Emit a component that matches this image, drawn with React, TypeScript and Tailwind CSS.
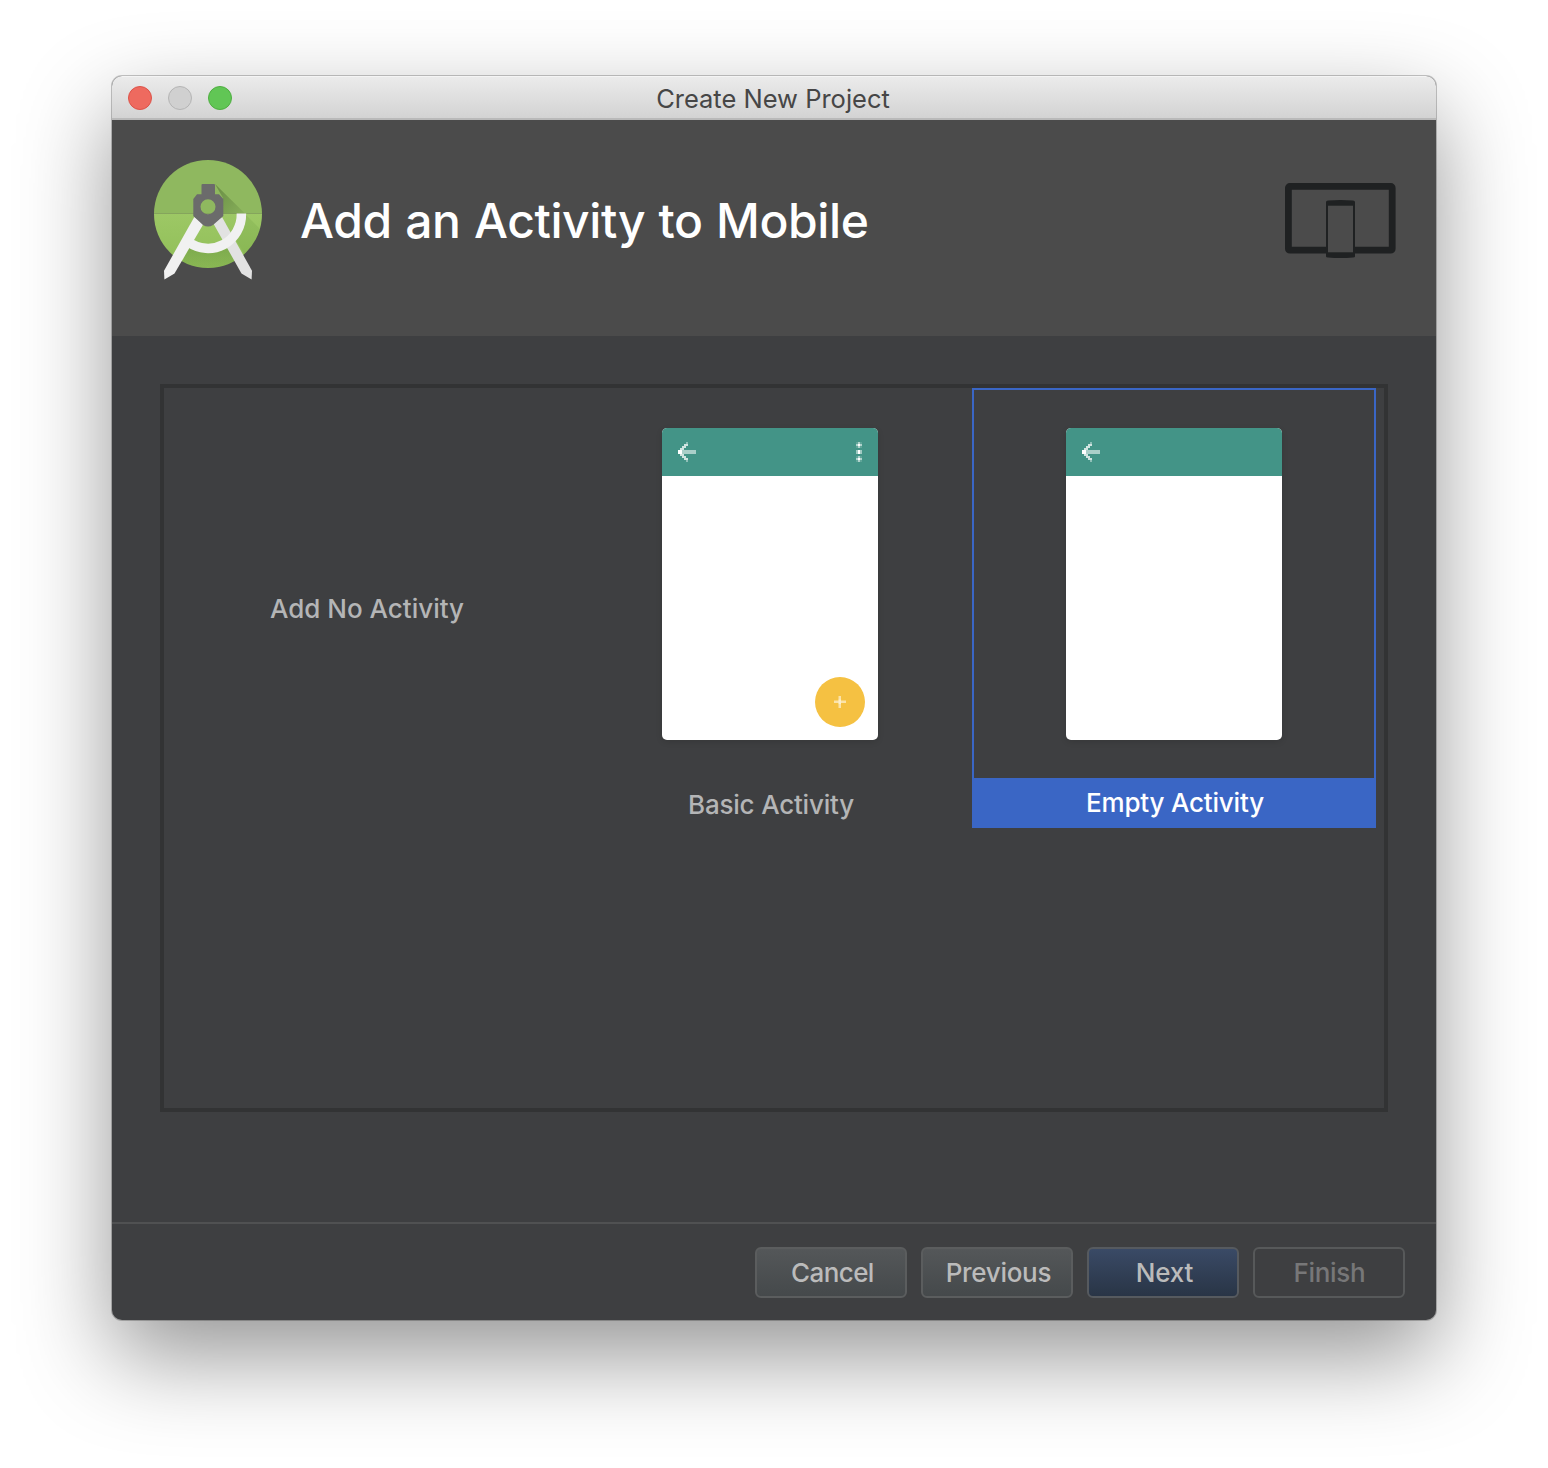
import React from "react";

function StudioLogo() {
  return (
    <svg width="112" height="124" viewBox="0 0 112 124" className="block">
      <defs>
        <clipPath id="disc"><circle cx="56" cy="56" r="54" /></clipPath>
        <linearGradient id="cast" x1="62" y1="30" x2="90" y2="58" gradientUnits="userSpaceOnUse">
          <stop offset="0" stopColor="#3f5c28" stopOpacity="0.45" />
          <stop offset="1" stopColor="#3f5c28" stopOpacity="0.1" />
        </linearGradient>
        <linearGradient id="low" x1="0" y1="55" x2="0" y2="110" gradientUnits="userSpaceOnUse">
          <stop offset="0" stopColor="#9dc865" />
          <stop offset="1" stopColor="#90be58" />
        </linearGradient>
        <linearGradient id="between" x1="0" y1="90" x2="0" y2="112" gradientUnits="userSpaceOnUse">
          <stop offset="0" stopColor="#4c7a2c" stopOpacity="0.32" />
          <stop offset="1" stopColor="#4c7a2c" stopOpacity="0.08" />
        </linearGradient>
      </defs>
      <g clipPath="url(#disc)">
        <rect width="112" height="55.500" fill="#8fb85f" />
        <rect y="55.500" width="112" height="57" fill="url(#low)" />
        <path d="M63 26 L93 55.500 H71 V40Z" fill="url(#cast)" />
        <path d="M36 90 Q56 98 78 90 L92 114 H26Z" fill="url(#between)" />
        <path d="M94 57 L112 75 V100 L98 106 L84 82Z" fill="#4c7a2c" opacity="0.12" />
      </g>
      <path d="M60.500 64 L70 59 L100 112.700 L99.600 121.500 L89.500 115.500 Z" fill="#e2e2e2" />
      <path d="M89.400 55.500 A33.400 34 0 0 1 36.500 84" fill="none" stroke="#f1f1f1" strokeWidth="9.500" />
      <path d="M42.300 59 L52 65 L22.500 115.500 L12.400 121.500 L12 112.700 Z" fill="#f1f1f1" />
      <path
        fillRule="evenodd"
        d="M50.500 26 H62 Q63 26 63 27 V36.300 H67 L71.300 41 V58 L61 67 Q56 70 51 67 L41.300 58 V41 L45 36.300 H49.500 V27 Q49.500 26 50.500 26Z M56 41.300 A7.500 7.500 0 1 0 56 56.300 A7.500 7.500 0 1 0 56 41.300Z"
        fill="#6b6b6b"
      />
    </svg>
  );
}

function DevicesIcon() {
  return (
    <svg width="112" height="78" viewBox="0 0 112 78" className="block">
      <rect x="4.4" y="4.4" width="103.8" height="63.8" rx="1.5" fill="none" stroke="#1f2122" strokeWidth="6.8" />
      <path d="M42 20 Q42 18.800 44 18.600 Q56.500 17.400 69 18.600 Q71 18.800 71 20 V74.500 Q71 75.500 69 75.600 Q56.500 76.600 44 75.600 Q42 75.500 42 74.500Z" fill="#1f2122" />
      <rect x="44" y="23.700" width="25" height="46.600" fill="#4b4b4b" />
    </svg>
  );
}

function BackArrow() {
  return (
    <svg width="22" height="20" viewBox="0 0 11 10" shapeRendering="crispEdges" className="block" fill="#fff">
      <path d="M1 4h2v2h-2z" />
      <path d="M3 4h7v2h-7z" opacity="0.55" />
      <path d="M2 3h2v1h-2zM3 2h2v1h-2zM4 1h2v1h-2zM2 6h2v1h-2zM3 7h2v1h-2zM4 8h2v1h-2z" opacity="0.75" />
      <path d="M5 0h1v1h-1zM5 9h1v1h-1z" opacity="0.4" />
    </svg>
  );
}

function Dots() {
  return (
    <svg width="6" height="20" viewBox="0 0 3 10" shapeRendering="crispEdges" className="block" fill="#fff">
      <path d="M0 0h3v3h-3zM0 7h3v3h-3z" opacity="0.15" />
      <path d="M1 0h1v1h-1zM1 2h1v1h-1zM0 1h1v1h-1zM2 1h1v1h-1zM1 7h1v1h-1zM1 9h1v1h-1zM0 8h1v1h-1zM2 8h1v1h-1zM0 4h1v2h-1zM2 4h1v2h-1z" opacity="0.5" />
      <path d="M1 1h1v1h-1zM1 4h1v2h-1zM1 8h1v1h-1z" />
    </svg>
  );
}

function Thumbnail({ full }: { full?: boolean }) {
  return (
    <div className="flex h-[312px] w-[216px] flex-col overflow-hidden rounded-[5px] bg-white shadow-[0_2px_6px_rgba(0,0,0,0.12)]">
      <div className="flex h-12 items-center justify-between bg-[#439487] pr-4 pl-3.5">
        <BackArrow />
        {full && <Dots />}
      </div>
      {full && (
        <div className="flex flex-1 items-end justify-end pr-[13.5px] pb-[13.5px]">
          <div className="flex size-[49.5px] items-center justify-center rounded-full bg-[#f5c142]">
            <svg width="12" height="12" viewBox="0 0 12 12" fill="#fff">
              <path d="M4.500 0h2.500v12h-2.500zM0 4.500h12v2.500h-12z" opacity="0.55" />
              <path d="M4.500 3.500h2.500v4.500h-2.500z" opacity="0.4" />
            </svg>
          </div>
        </div>
      )}
    </div>
  );
}

const buttonBase =
  "flex h-[50.5px] w-[152px] items-center justify-center rounded-[6px] border-2 text-[26px] font-[450]";

export default function App() {
  return (
    <div className="h-[1468px] w-[1548px] overflow-hidden bg-white px-28 pt-[76px] font-['Inter',sans-serif]">
      <div className="flex h-[1244px] w-[1324px] flex-col overflow-hidden rounded-[10px] bg-[#3e3f41] shadow-[0_0_0_1px_rgba(0,0,0,0.22),0_36px_92px_rgba(0,0,0,0.42)]">
        <div className="flex h-11 shrink-0 items-center border-t border-b-2 border-t-[#f4f4f4] border-b-[#b9b9b9] bg-gradient-to-b from-[#ebebeb] to-[#d3d3d3]">
          <div className="flex w-40 gap-4 pl-4">
            <span className="size-6 rounded-full border border-[#dc5349] bg-[#ee6a5f]" />
            <span className="size-6 rounded-full border border-[#b4b4b4] bg-[#d0d0d0]" />
            <span className="size-6 rounded-full border border-[#4fae41] bg-[#61c655]" />
          </div>
          <div className="flex-1 pt-0.5 pr-[162px] text-center text-[25.5px] leading-none whitespace-nowrap text-[#464646]">
            <span>Create New Project</span>
          </div>
        </div>

        <header className="flex h-[216px] shrink-0 bg-[#4b4b4b] pr-10 pl-10">
          <div className="pt-[38px]"><StudioLogo /></div>
          <h1 className="flex-1 pt-[72px] pl-9 text-[48px] leading-[58px] font-[450] tracking-[-0.4px] [word-spacing:1px] whitespace-nowrap text-white">
            <span>Add an Activity to Mobile</span>
          </h1>
          <div className="pt-[62px]"><DevicesIcon /></div>
        </header>

        <main className="flex-1 px-12 pt-12">
          <div className="grid h-[728px] grid-cols-[404px_404px_404px] border-4 border-[#323334] text-[26px] leading-8 font-[450]">
            <div className="flex h-[440px] items-center justify-center pt-0.5 pl-0.5 text-[#b4b5b6]">
              <span>Add No Activity</span>
            </div>
            <div className="flex h-[440px] flex-col items-center pt-10 text-[#b4b5b6]">
              <Thumbnail full />
              <div className="pt-[49px] pl-0.5 tracking-[-0.2px]"><span>Basic Activity</span></div>
            </div>
            <div className="flex h-[440px] flex-col items-center border-2 border-[#3a66c5] pt-[38px]">
              <Thumbnail />
              <div className="mt-[38px] flex h-12 w-full shrink-0 items-center justify-center bg-[#3a66c5] pt-0.5 pl-0.5 tracking-[-0.2px] text-white">
                <span>Empty Activity</span>
              </div>
            </div>
          </div>
        </main>

        <footer className="flex h-[98px] shrink-0 justify-end gap-3.5 border-t-2 border-[#505152] pt-[23.3px] pr-[30.6px] text-[#bbbbbb]">
          <button className={`${buttonBase} border-[#5b5d5e] bg-gradient-to-b from-[#545759] to-[#45494b] pl-0.5 tracking-[-0.6px]`}><span>Cancel</span></button>
          <button className={`${buttonBase} border-[#5b5d5e] bg-gradient-to-b from-[#545759] to-[#45494b] pl-0.5 tracking-[-0.3px]`}><span>Previous</span></button>
          <button className={`${buttonBase} border-[#565a5f] bg-gradient-to-b from-[#3a4a66] to-[#293546] pl-0.5 tracking-[-0.2px]`}><span>Next</span></button>
          <button className={`${buttonBase} border-[#57595a] tracking-[-0.3px] text-[#777778]`}><span>Finish</span></button>
        </footer>
      </div>
    </div>
  );
}
